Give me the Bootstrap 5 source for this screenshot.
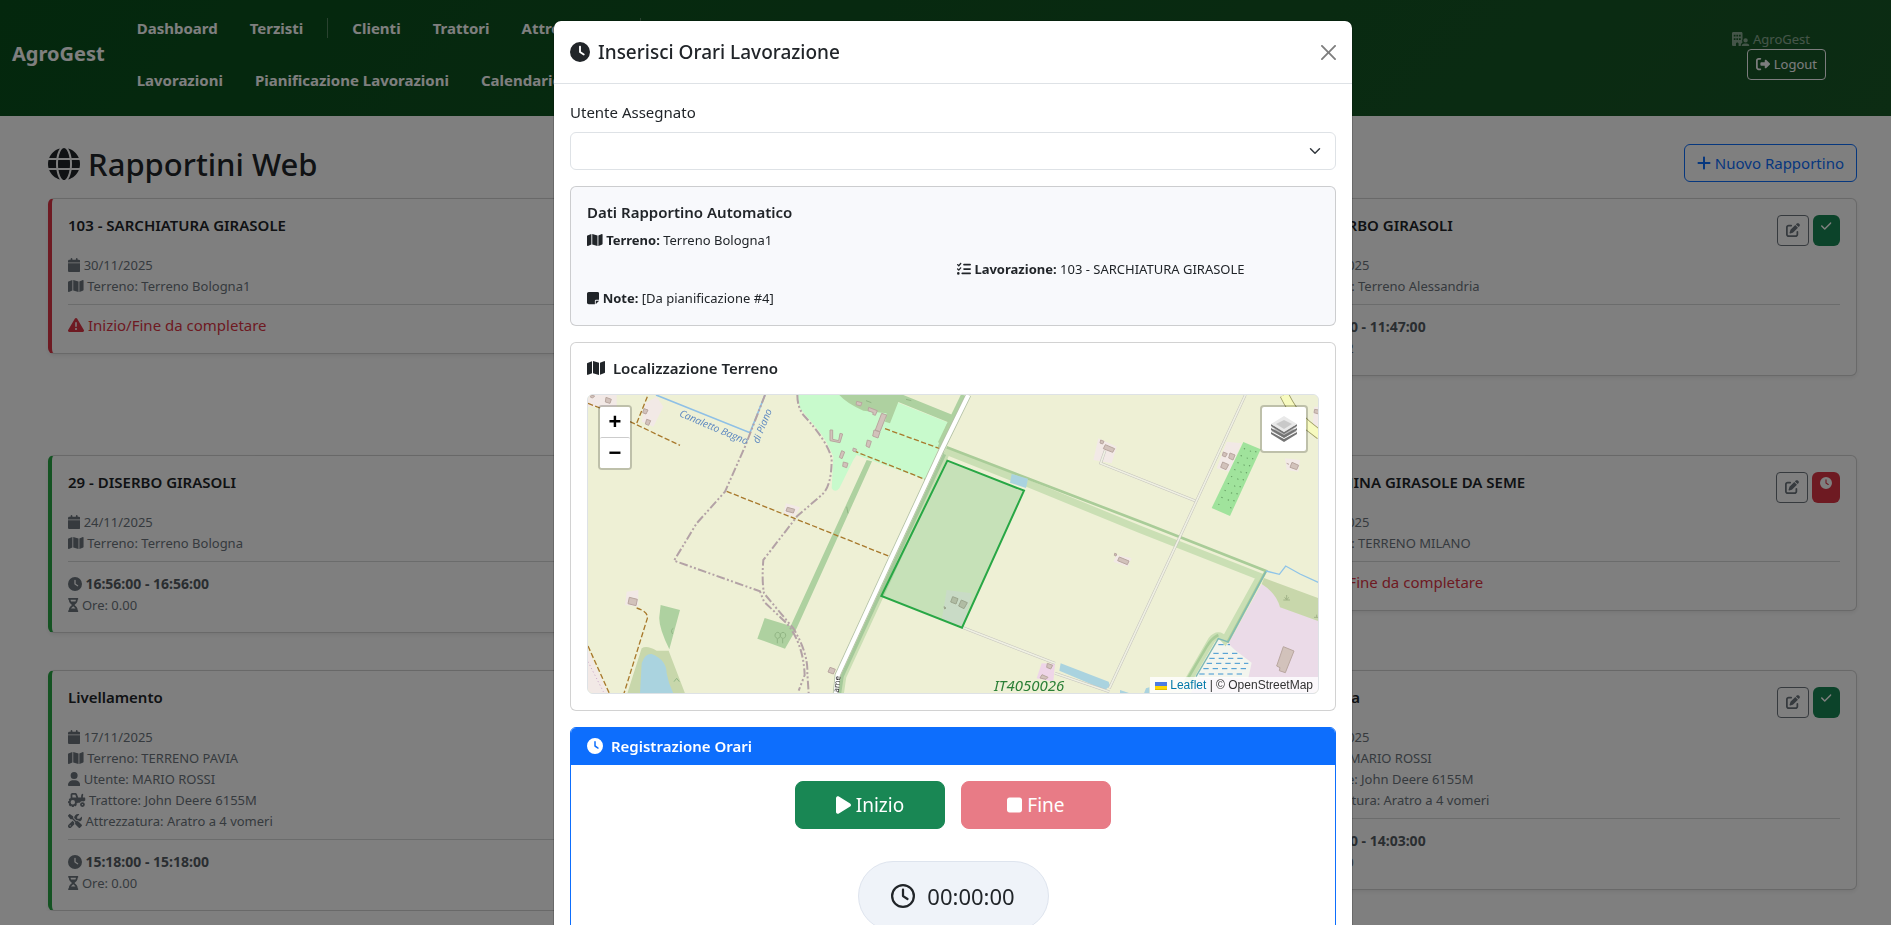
<!DOCTYPE html>
<html lang="it">
<head>
<meta charset="utf-8">
<meta name="viewport" content="width=device-width, initial-scale=1">
<title>AgroGest - Rapportini Web</title>
<link href="https://cdn.jsdelivr.net/npm/bootstrap@5.3.0/dist/css/bootstrap.min.css" rel="stylesheet">
<style>
  :root { --scrollbar: 15px; }
  body { font-family: "Noto Sans", "Open Sans", sans-serif; font-size: 15px; line-height: 24px; overflow: hidden; }
  h6, .h6 { font-size: 15px; line-height: 19px; }
  .btn, .form-select, .form-label { font-size: 15px; line-height: 24px; }
  .btn-sm { font-size: 13px; line-height: 21px; }
  .ic { height: 16px; fill: currentColor; vertical-align: -2px; }
  .ic-14 { height: 14px; }
  .ic-12 { height: 12px; vertical-align: 0; }
  .ic-20 { height: 20px; vertical-align: -3px; }
  .ic-24 { height: 24px; }
  .ic-32 { height: 32px; vertical-align: -4px; }

  .topbar { background: linear-gradient(135deg, #084f1b 0%, #185827 100%); min-height: 116px; padding-right: 65px; }
  .topbar .navbar-brand { font-size: 20px; font-weight: 700; }
  .main-links { width: 620px; row-gap: 12px; }
  .main-links .nav-link { font-weight: 700; color: #fff; padding: 8px 16px; line-height: 24px; }
  .nav-sep { width: 1px; height: 20px; background: rgba(255, 255, 255, .3); margin: 0 8px; }
  .company { font-size: 13px; line-height: 20px; opacity: .5; padding-right: 16px; }

  .page { padding: 28px 34px 0 48px; }
  .page-head { margin-bottom: 12px; }
  .page h1 { font-size: 31px; line-height: 40px; font-weight: 500; padding-bottom: 2px; }
  .report-grid { display: grid; grid-template-columns: repeat(3, 1fr); gap: 16px; align-items: start; }
  .report { border-left: 4px solid #28a745; box-shadow: 0 2px 4px rgba(0, 0, 0, .075); }
  .report.todo { border-left-color: #dc3545; }
  .report .card-head { height: 31px; margin-bottom: 9px; }
  .report h2 { font-size: 15px; line-height: 20px; font-weight: 600; margin: 0; }
  .report .details { font-size: 13px; line-height: 21px; color: #6c757d; }
  .report .details b { font-size: 14px; color: #555c63; }
  .report hr { margin: 7px 0 8px; opacity: .18; }
  .report .hours { padding-top: 3px; }
  .report .badge { padding: 5px 8px; }
  .report .btn-sm { padding: 4px 8px; }

  .modal { padding-left: var(--scrollbar); }
  .modal-dialog { margin-top: 20px; }
  .modal-title { font-size: 19px; line-height: 30px; font-weight: 500; }
  .auto-data { background: #f8f9fc; font-size: 13px; line-height: 21px; }
  .modal h3 { font-size: 15px; line-height: 19px; font-weight: 600; }
  .time-btn { width: 150px; height: 48px; font-size: 19px; border-radius: 8px; }
  .timer { width: 191px; height: 70px; margin-top: 32px; border-radius: 50px; background: #eff3f9; border: 1px solid #dee4ee; font-size: 22px; }
  .hours-head { padding: 9px 16px 8px; }

  .field-map { position: relative; height: 300px; border: 1px solid #dee2e6; border-radius: 6px; overflow: hidden; background: #eef0d5; }
  .field-map > svg { width: 100%; height: 100%; display: block; }
  .map-ctl { position: absolute; top: 10px; border: 2px solid rgba(0, 0, 0, .2); border-radius: 4px; background-clip: padding-box; background-color: #fff; }
  .map-zoom { left: 10px; }
  .map-zoom button { display: block; width: 30px; height: 30px; padding: 0; border: 0; background: #fff; border-radius: 2px; font: bold 22px/30px "Liberation Sans", sans-serif; color: #000; }
  .map-zoom button + button { border-top: 1px solid #ccc; height: 31px; }
  .map-layers { right: 10px; width: 48px; height: 48px; padding: 9px; }
  .map-layers svg { width: 26px; height: 26px; display: block; }
  .map-credit { position: absolute; right: 0; bottom: 0; padding: 0 5px; background: rgba(255, 255, 255, .8); font: 12px/16px "Liberation Sans", Arial, sans-serif; color: #333; }
  .map-credit a { color: #0078a8; text-decoration: none; }
  .map-credit a.plain { color: #333; }
</style>
</head>
<body>

<svg width="0" height="0" class="d-none" aria-hidden="true">
  <symbol id="clock" viewBox="0 0 512 512"><path d="M256 0a256 256 0 1 1 0 512A256 256 0 1 1 256 0zM232 120V256c0 8 4 15.500 10.700 20l96 64c11 7.400 25.900 4.400 33.300-6.700s4.400-25.900-6.700-33.300L280 243.200V120c0-13.300-10.700-24-24-24s-24 10.700-24 24z"/></symbol>
  <symbol id="clock-o" viewBox="0 0 512 512"><path d="M464 256A208 208 0 1 1 48 256a208 208 0 1 1 416 0zM0 256a256 256 0 1 0 512 0A256 256 0 1 0 0 256zM232 120V256c0 8 4 15.500 10.700 20l96 64c11 7.400 25.900 4.400 33.300-6.700s4.400-25.900-6.700-33.300L280 243.200V120c0-13.300-10.700-24-24-24s-24 10.700-24 24z"/></symbol>
  <symbol id="cal" viewBox="0 0 448 512"><path d="M96 32V64H48C21.500 64 0 85.500 0 112v48H448V112c0-26.500-21.500-48-48-48H352V32c0-17.700-14.300-32-32-32s-32 14.300-32 32V64H160V32c0-17.700-14.300-32-32-32S96 14.300 96 32zM448 192H0V464c0 26.500 21.500 48 48 48H400c26.500 0 48-21.500 48-48V192z"/></symbol>
  <symbol id="map" viewBox="0 0 576 512"><path d="M384 476.100L192 421.200V35.900L384 90.800V476.100zm32-1.200V88.400L543.100 37.500c15.800-6.300 32.900 5.300 32.900 22.300V394.600c0 9.800-6 18.600-15.100 22.300L416 474.800zM15.100 95.100L160 37.200V423.600L32.900 474.500C17.100 480.800 0 469.200 0 452.200V117.400c0-9.800 6-18.600 15.100-22.300z"/></symbol>
  <symbol id="warn" viewBox="0 0 512 512"><path d="M256 32c14.200 0 27.300 7.500 34.500 19.800l216 368c7.300 12.400 7.300 27.700 .2 40.100S486.300 480 472 480H40c-14.300 0-27.600-7.700-34.700-20.100s-7-27.800 .2-40.100l216-368C228.700 39.500 241.800 32 256 32zm0 128c-13.300 0-24 10.700-24 24V296c0 13.300 10.700 24 24 24s24-10.700 24-24V184c0-13.300-10.700-24-24-24zm32 224a32 32 0 1 0 -64 0 32 32 0 1 0 64 0z"/></symbol>
  <symbol id="user" viewBox="0 0 448 512"><path d="M224 256A128 128 0 1 0 224 0a128 128 0 1 0 0 256zm-45.700 48C79.800 304 0 383.800 0 482.300C0 498.700 13.300 512 29.700 512H418.300c16.400 0 29.700-13.300 29.700-29.700C448 383.800 368.200 304 269.700 304H178.300z"/></symbol>
  <symbol id="hour" viewBox="0 0 384 512"><path d="M32 0C14.300 0 0 14.300 0 32S14.300 64 32 64V75c0 42.400 16.900 83.100 46.900 113.100L146.700 256 78.900 323.900C48.900 353.900 32 394.600 32 437v11c-17.700 0-32 14.300-32 32s14.300 32 32 32H64 320h32c17.700 0 32-14.300 32-32s-14.300-32-32-32V437c0-42.400-16.900-83.100-46.900-113.100L237.300 256l67.900-67.900c30-30 46.900-70.700 46.900-113.100V64c17.700 0 32-14.300 32-32s-14.300-32-32-32H320 64 32zM96 75V64H288V75c0 19-5.600 37.400-16 53H112c-10.300-15.600-16-34-16-53zm16 309c3.500-5.300 7.600-10.300 12.100-14.900L192 301.300l67.900 67.900c4.600 4.600 8.600 9.600 12.100 14.900H112z"/></symbol>
  <symbol id="tractor" viewBox="0 0 640 512"><path fill-rule="evenodd" d="M96 64c0-35.300 28.700-64 64-64H266.300c26.200 0 49.700 15.900 59.400 40.200L373.700 160H480V126.200c0-24.800 5.800-49.300 16.900-71.600l2.500-5c7.900-15.800 27.100-22.200 42.900-14.300s22.200 27.100 14.300 42.900l-2.500 5c-6.700 13.300-10.100 28-10.100 42.900V160h56c22.100 0 40 17.900 40 40v45.400c0 16.500-8.500 31.900-22.600 40.700l-43.300 27.100c-14.200-5.900-29.800-9.200-46.100-9.200c-39.300 0-74.100 18.900-96 48H352c0 17.700-14.300 32-32 32h-8.200c-1.700 4.800-3.700 9.500-5.800 14.100l5.800 5.800c12.500 12.500 12.500 32.800 0 45.300l-22.600 22.600c-12.500 12.500-32.800 12.500-45.300 0l-5.800-5.800c-4.600 2.200-9.300 4.100-14.100 5.800V480c0 17.700-14.300 32-32 32H160c-17.700 0-32-14.300-32-32v-8.200c-4.800-1.700-9.500-3.700-14.100-5.800l-5.800 5.800c-12.500 12.500-32.800 12.500-45.300 0L40.200 449.100c-12.500-12.500-12.500-32.800 0-45.300l5.800-5.800c-2.200-4.600-4.100-9.300-5.800-14.100H32c-17.700 0-32-14.300-32-32V320c0-17.700 14.300-32 32-32h8.200c1.700-4.800 3.700-9.500 5.800-14.100l-5.800-5.800c-12.500-12.500-12.500-32.800 0-45.300l22.600-22.600c9-9 21.900-11.500 33.100-7.600V64zm170.300 0H160v96h144.700L266.300 64zM176 256a80 80 0 1 0 0 160 80 80 0 1 0 0-160zM528 336a88 88 0 1 0 0 176 88 88 0 1 0 0-176zm0 64a24 24 0 1 1 0 48 24 24 0 1 1 0-48z"/></symbol>
  <symbol id="tools" viewBox="0 0 512 512"><path d="M78.600 5C69.100-2.400 55.600-1.500 47 7L7 47c-8.500 8.500-9.400 22-2.100 31.600l80 104c4.500 5.900 11.600 9.400 19 9.400h54.100l109 109c-14.700 29-10 65.400 14.300 89.600l112 112c12.500 12.500 32.800 12.500 45.300 0l64-64c12.500-12.500 12.500-32.800 0-45.300l-112-112c-24.200-24.200-60.600-29-89.600-14.300l-109-109V104c0-7.500-3.500-14.500-9.400-19L78.600 5zM19.900 396.100C7.200 408.800 0 426.100 0 444.100C0 481.600 30.400 512 67.900 512c18 0 35.300-7.200 48-19.900L233.700 374.300c-7.800-20.900-9-43.600-3.600-65.100l-61.700-61.700L19.900 396.100zM512 144c0-10.500-1.100-20.700-3.200-30.500c-2.400-11.200-16.100-14.100-24.200-6l-63.900 63.900c-3 3-7.100 4.700-11.300 4.700H352c-8.800 0-16-7.200-16-16V102.600c0-4.200 1.700-8.300 4.700-11.300l63.900-63.900c8.100-8.100 5.200-21.800-6-24.200C388.700 1.100 378.500 0 368 0C288.500 0 224 64.500 224 144l0 .8 85.300 85.300c36-9.100 75.800 .5 104 28.700L429 274.500c49-23 83-72.800 83-130.500zM56 432a24 24 0 1 1 48 0 24 24 0 1 1 -48 0z"/></symbol>
  <symbol id="globe" viewBox="0 0 512 512"><path d="M352 256c0 22.200-1.200 43.600-3.300 64H163.300c-2.200-20.400-3.300-41.800-3.300-64s1.200-43.600 3.300-64H348.700c2.200 20.400 3.300 41.800 3.300 64zm28.800-64H503.900c5.300 20.500 8.100 41.900 8.100 64s-2.800 43.500-8.100 64H380.800c2.100-20.600 3.200-42 3.200-64s-1.100-43.400-3.200-64zm112.600-32H376.700c-10-63.900-29.800-117.400-55.300-151.600c78.300 20.700 142 77.500 171.900 151.600zm-149.100 0H167.700c6.100-36.400 15.500-68.600 27-94.700c10.500-23.600 22.200-40.700 33.500-51.500C239.400 3.200 248.700 0 256 0s16.600 3.200 27.800 13.800c11.300 10.800 23 27.900 33.500 51.500c11.600 26 20.900 58.200 27 94.700zm-209 0H18.600C48.600 85.900 112.200 29.100 190.600 8.400C165.100 42.600 145.300 96.100 135.300 160zM8.100 192H131.200c-2.100 20.600-3.200 42-3.200 64s1.100 43.400 3.200 64H8.100C2.800 299.500 0 278.100 0 256s2.800-43.500 8.100-64zM194.700 446.600c-11.600-26-20.900-58.200-27-94.600H344.300c-6.100 36.400-15.500 68.600-27 94.600c-10.500 23.600-22.200 40.700-33.500 51.500C272.600 508.800 263.300 512 256 512s-16.600-3.200-27.800-13.800c-11.300-10.800-23-27.900-33.500-51.500zM135.300 352c10 63.900 29.800 117.400 55.300 151.600C112.200 482.900 48.600 426.100 18.600 352H135.300zm358.100 0c-30 74.100-93.600 130.900-171.900 151.600c25.500-34.200 45.200-87.700 55.300-151.600H493.400z"/></symbol>
  <symbol id="list" viewBox="0 0 512 512"><path d="M152.100 38.200c9.900 8.900 10.700 24 1.800 33.900l-72 80c-4.400 4.900-10.600 7.800-17.200 7.900s-12.900-2.400-17.600-7L7 113C-2.300 103.600-2.300 88.400 7 79s24.600-9.400 33.900 0l22.100 22.100 55.100-61.200c8.900-9.900 24-10.700 33.900-1.800zm0 160c9.900 8.900 10.700 24 1.800 33.900l-72 80c-4.400 4.900-10.600 7.800-17.200 7.900s-12.900-2.400-17.600-7L7 273c-9.400-9.400-9.400-24.600 0-33.900s24.600-9.400 33.900 0l22.100 22.100 55.100-61.200c8.900-9.900 24-10.700 33.900-1.800zM224 96c0-17.700 14.300-32 32-32H480c17.700 0 32 14.300 32 32s-14.300 32-32 32H256c-17.700 0-32-14.300-32-32zm0 160c0-17.700 14.300-32 32-32H480c17.700 0 32 14.300 32 32s-14.300 32-32 32H256c-17.700 0-32-14.300-32-32zM160 416c0-17.700 14.300-32 32-32H480c17.700 0 32 14.300 32 32s-14.300 32-32 32H192c-17.700 0-32-14.300-32-32zM48 368a48 48 0 1 1 0 96 48 48 0 1 1 0-96z"/></symbol>
  <symbol id="note" viewBox="0 0 448 512"><path d="M64 32C28.700 32 0 60.700 0 96V416c0 35.300 28.700 64 64 64H288V368c0-26.500 21.500-48 48-48H448V96c0-35.300-28.700-64-64-64H64zM448 352H336c-8.800 0-16 7.200-16 16V480l32-32 64-64 32-32z"/></symbol>
  <symbol id="play" viewBox="0 0 384 512"><path d="M73 39c-14.800-9.100-33.400-9.400-48.500-.9S0 62.600 0 80V432c0 17.400 9.400 33.400 24.500 41.900s33.700 8.100 48.500-.9L361 297c14.300-8.700 23-24.200 23-41s-8.700-32.200-23-41L73 39z"/></symbol>
  <symbol id="stop" viewBox="0 0 384 512"><path d="M0 128C0 92.700 28.700 64 64 64H320c35.300 0 64 28.700 64 64V384c0 35.300-28.700 64-64 64H64c-35.300 0-64-28.700-64-64V128z"/></symbol>
  <symbol id="plus" viewBox="0 0 448 512"><path d="M256 80c0-17.700-14.300-32-32-32s-32 14.300-32 32V224H48c-17.700 0-32 14.300-32 32s14.300 32 32 32H192V432c0 17.700 14.300 32 32 32s32-14.300 32-32V288H400c17.700 0 32-14.300 32-32s-14.300-32-32-32H256V80z"/></symbol>
  <symbol id="check" viewBox="0 0 448 512"><path d="M438.600 105.400c12.500 12.500 12.500 32.800 0 45.300l-256 256c-12.500 12.500-32.800 12.500-45.300 0l-128-128c-12.500-12.500-12.500-32.800 0-45.300s32.800-12.500 45.300 0L160 338.700 393.400 105.400c12.500-12.500 32.800-12.500 45.300 0z"/></symbol>
  <symbol id="edit" viewBox="0 0 512 512"><path d="M471.600 21.700c-21.900-21.900-57.300-21.900-79.200 0L362.300 51.700l97.900 97.900 30.100-30.100c21.900-21.900 21.900-57.300 0-79.200L471.600 21.700zm-299.200 220c-6.100 6.100-10.800 13.600-13.500 21.900l-29.600 88.800c-2.900 8.600-.6 18.100 5.800 24.600s15.900 8.700 24.600 5.800l88.800-29.600c8.200-2.700 15.700-7.400 21.900-13.500L437.700 172.300 339.700 74.300 172.400 241.700zM96 64C43 64 0 107 0 160V416c0 53 43 96 96 96H352c53 0 96-43 96-96V320c0-17.700-14.300-32-32-32s-32 14.300-32 32v96c0 17.700-14.300 32-32 32H96c-17.700 0-32-14.300-32-32V160c0-17.700 14.300-32 32-32h96c17.700 0 32-14.300 32-32s-14.300-32-32-32H96z"/></symbol>
  <symbol id="exit" viewBox="0 0 512 512"><path d="M377.900 105.900L500.700 228.700c7.200 7.200 11.300 17.100 11.300 27.300s-4.100 20.100-11.300 27.300L377.900 406.100c-6.400 6.400-15 9.900-24 9.900c-18.700 0-33.900-15.200-33.900-33.900l0-62.100-128 0c-17.700 0-32-14.300-32-32l0-64c0-17.700 14.300-32 32-32l128 0 0-62.100c0-18.700 15.200-33.900 33.900-33.900c9 0 17.600 3.600 24 9.900zM160 96L96 96c-17.700 0-32 14.300-32 32l0 256c0 17.700 14.300 32 32 32l64 0c17.700 0 32 14.300 32 32s-14.300 32-32 32l-64 0c-53 0-96-43-96-96L0 128C0 75 43 32 96 32l64 0c17.700 0 32 14.300 32 32s-14.300 32-32 32z"/></symbol>
  <symbol id="company" viewBox="0 0 640 512"><path fill-rule="evenodd" d="M48 0C22 0 0 22 0 48V464c0 26 22 48 48 48h96V432c0-26 22-48 48-48s48 22 48 48v80h84c-6-12-6-30-2-44c10-42 34-76 66-96c-22-30-28-70-4-110V48c0-26-22-48-48-48H48zM64 96h64v64H64zM160 96h64v64h-64zM256 96h64v64h-64zM64 224h64v64H64zM160 224h64v64h-64zM256 224h64v64h-64zM496 224a80 80 0 1 1 0 160 80 80 0 1 1 0-160zM458 416h76c58 0 106 40 106 82c0 8-6 14-14 14H366c-8 0-14-6-14-14c0-42 48-82 106-82z"/></symbol>
</svg>

<nav class="navbar topbar navbar-dark pt-0 pb-2 d-flex flex-nowrap justify-content-between">
  <div class="d-flex align-items-center ps-2 ms-1">
    <a class="navbar-brand m-0 me-3" href="#">AgroGest</a>
    <div class="main-links d-flex flex-wrap align-items-center">
      <a class="nav-link" href="#">Dashboard</a>
      <a class="nav-link" href="#">Terzisti</a>
      <span class="nav-sep"></span>
      <a class="nav-link" href="#">Clienti</a>
      <a class="nav-link" href="#">Trattori</a>
      <a class="nav-link" href="#">Attrezzature</a>
      <span class="nav-sep"></span>
      <a class="nav-link" href="#">Lavorazioni</a>
      <a class="nav-link" href="#">Pianificazione Lavorazioni</a>
      <a class="nav-link" href="#">Calendario</a>
    </div>
  </div>
  <div class="d-flex flex-column align-items-end text-white">
    <span class="company"><svg class="ic ic-14" viewBox="0 0 640 512"><use href="#company"/></svg> AgroGest</span>
    <button type="button" class="btn btn-sm btn-outline-light"><svg class="ic ic-14" viewBox="0 0 512 512"><use href="#exit"/></svg> Logout</button>
  </div>
</nav>

<main class="page">
  <div class="page-head d-flex justify-content-between align-items-start">
    <h1 class="m-0"><svg class="ic ic-32" viewBox="0 0 512 512"><use href="#globe"/></svg> Rapportini Web</h1>
    <button type="button" class="btn btn-outline-primary"><svg class="ic" viewBox="0 0 448 512"><use href="#plus"/></svg> Nuovo Rapportino</button>
  </div>

  <div class="report-grid">
    <article class="card report todo"><div class="card-body">
      <div class="card-head d-flex justify-content-between"><h2>103 - SARCHIATURA GIRASOLE</h2></div>
      <div class="details">
        <div><svg class="ic ic-14" viewBox="0 0 448 512"><use href="#cal"/></svg> 30/11/2025</div>
        <div><svg class="ic ic-14" viewBox="0 0 576 512"><use href="#map"/></svg> Terreno: Terreno Bologna1</div>
      </div>
      <hr>
      <div class="text-danger"><svg class="ic" viewBox="0 0 512 512"><use href="#warn"/></svg> Inizio/Fine da completare</div>
    </div></article>

    <article class="card report"><div class="card-body">
      <div class="card-head d-flex justify-content-between"><h2>Aratura</h2></div>
      <div class="details">
        <div><svg class="ic ic-14" viewBox="0 0 448 512"><use href="#cal"/></svg> 28/11/2025</div>
        <div><svg class="ic ic-14" viewBox="0 0 576 512"><use href="#map"/></svg> Terreno: TERRENO PAVIA</div>
        <div><svg class="ic ic-14" viewBox="0 0 448 512"><use href="#user"/></svg> Utente: MARIO ROSSI</div>
        <div><svg class="ic ic-14" viewBox="0 0 640 512"><use href="#tractor"/></svg> Trattore: John Deere 6155M</div>
        <div><svg class="ic ic-14" viewBox="0 0 512 512"><use href="#tools"/></svg> Attrezzatura: Aratro a 4 vomeri</div>
      </div>
      <hr>
      <div class="details hours">
        <div><svg class="ic ic-14" viewBox="0 0 512 512"><use href="#clock"/></svg> <b>10:20:00 - 11:20:00</b></div>
        <div><svg class="ic ic-14" viewBox="0 0 384 512"><use href="#hour"/></svg> Ore: 1.00</div>
      </div>
    </div></article>

    <article class="card report"><div class="card-body">
      <div class="card-head d-flex justify-content-between"><h2>29 - DISERBO GIRASOLI</h2>
        <div class="d-flex gap-1">
          <button type="button" class="btn btn-sm btn-outline-secondary" aria-label="Modifica"><svg class="ic ic-14" viewBox="0 0 512 512"><use href="#edit"/></svg></button>
          <span class="badge text-bg-success"><svg class="ic ic-12" viewBox="0 0 448 512"><use href="#check"/></svg></span>
        </div></div>
      <div class="details">
        <div><svg class="ic ic-14" viewBox="0 0 448 512"><use href="#cal"/></svg> 25/11/2025</div>
        <div><svg class="ic ic-14" viewBox="0 0 576 512"><use href="#map"/></svg> Terreno: Terreno Alessandria</div>
      </div>
      <hr>
      <div class="details hours">
        <div><svg class="ic ic-14" viewBox="0 0 512 512"><use href="#clock"/></svg> <b>11:46:00 - 11:47:00</b></div>
        <div><svg class="ic ic-14" viewBox="0 0 384 512"><use href="#hour"/></svg> Ore: 0.02</div>
      </div>
    </div></article>

    <article class="card report"><div class="card-body">
      <div class="card-head d-flex justify-content-between"><h2>29 - DISERBO GIRASOLI</h2></div>
      <div class="details">
        <div><svg class="ic ic-14" viewBox="0 0 448 512"><use href="#cal"/></svg> 24/11/2025</div>
        <div><svg class="ic ic-14" viewBox="0 0 576 512"><use href="#map"/></svg> Terreno: Terreno Bologna</div>
      </div>
      <hr>
      <div class="details hours">
        <div><svg class="ic ic-14" viewBox="0 0 512 512"><use href="#clock"/></svg> <b>16:56:00 - 16:56:00</b></div>
        <div><svg class="ic ic-14" viewBox="0 0 384 512"><use href="#hour"/></svg> Ore: 0.00</div>
      </div>
    </div></article>

    <article class="card report"><div class="card-body">
      <div class="card-head d-flex justify-content-between"><h2>Concimazione</h2></div>
      <div class="details">
        <div><svg class="ic ic-14" viewBox="0 0 448 512"><use href="#cal"/></svg> 22/11/2025</div>
        <div><svg class="ic ic-14" viewBox="0 0 576 512"><use href="#map"/></svg> Terreno: TERRENO PAVIA</div>
        <div><svg class="ic ic-14" viewBox="0 0 448 512"><use href="#user"/></svg> Utente: MARIO ROSSI</div>
      </div>
      <hr>
      <div class="details hours">
        <div><svg class="ic ic-14" viewBox="0 0 512 512"><use href="#clock"/></svg> <b>09:00:00 - 10:00:00</b></div>
        <div><svg class="ic ic-14" viewBox="0 0 384 512"><use href="#hour"/></svg> Ore: 1.00</div>
      </div>
    </div></article>

    <article class="card report todo"><div class="card-body">
      <div class="card-head d-flex justify-content-between"><h2>102 - SEMINA GIRASOLE DA SEME</h2>
        <div class="d-flex gap-1">
          <button type="button" class="btn btn-sm btn-outline-secondary" aria-label="Modifica"><svg class="ic ic-14" viewBox="0 0 512 512"><use href="#edit"/></svg></button>
          <span class="badge text-bg-danger"><svg class="ic ic-12" viewBox="0 0 512 512"><use href="#clock"/></svg></span>
        </div></div>
      <div class="details">
        <div><svg class="ic ic-14" viewBox="0 0 448 512"><use href="#cal"/></svg> 20/11/2025</div>
        <div><svg class="ic ic-14" viewBox="0 0 576 512"><use href="#map"/></svg> Terreno: TERRENO MILANO</div>
      </div>
      <hr>
      <div class="text-danger"><svg class="ic" viewBox="0 0 512 512"><use href="#warn"/></svg> Inizio/Fine da completare</div>
    </div></article>

    <article class="card report"><div class="card-body">
      <div class="card-head d-flex justify-content-between"><h2>Livellamento</h2></div>
      <div class="details">
        <div><svg class="ic ic-14" viewBox="0 0 448 512"><use href="#cal"/></svg> 17/11/2025</div>
        <div><svg class="ic ic-14" viewBox="0 0 576 512"><use href="#map"/></svg> Terreno: TERRENO PAVIA</div>
        <div><svg class="ic ic-14" viewBox="0 0 448 512"><use href="#user"/></svg> Utente: MARIO ROSSI</div>
        <div><svg class="ic ic-14" viewBox="0 0 640 512"><use href="#tractor"/></svg> Trattore: John Deere 6155M</div>
        <div><svg class="ic ic-14" viewBox="0 0 512 512"><use href="#tools"/></svg> Attrezzatura: Aratro a 4 vomeri</div>
      </div>
      <hr>
      <div class="details hours">
        <div><svg class="ic ic-14" viewBox="0 0 512 512"><use href="#clock"/></svg> <b>15:18:00 - 15:18:00</b></div>
        <div><svg class="ic ic-14" viewBox="0 0 384 512"><use href="#hour"/></svg> Ore: 0.00</div>
      </div>
    </div></article>

    <article class="card report"><div class="card-body">
      <div class="card-head d-flex justify-content-between"><h2>Aratura</h2></div>
      <div class="details">
        <div><svg class="ic ic-14" viewBox="0 0 448 512"><use href="#cal"/></svg> 16/11/2025</div>
        <div><svg class="ic ic-14" viewBox="0 0 448 512"><use href="#user"/></svg> Utente: MARIO ROSSI</div>
      </div>
    </div></article>

    <article class="card report"><div class="card-body">
      <div class="card-head d-flex justify-content-between"><h2>Erpicatura</h2>
        <div class="d-flex gap-1">
          <button type="button" class="btn btn-sm btn-outline-secondary" aria-label="Modifica"><svg class="ic ic-14" viewBox="0 0 512 512"><use href="#edit"/></svg></button>
          <span class="badge text-bg-success"><svg class="ic ic-12" viewBox="0 0 448 512"><use href="#check"/></svg></span>
        </div></div>
      <div class="details">
        <div><svg class="ic ic-14" viewBox="0 0 448 512"><use href="#cal"/></svg> 15/11/2025</div>
        <div><svg class="ic ic-14" viewBox="0 0 448 512"><use href="#user"/></svg> Utente: MARIO ROSSI</div>
        <div><svg class="ic ic-14" viewBox="0 0 640 512"><use href="#tractor"/></svg> Trattore: John Deere 6155M</div>
        <div><svg class="ic ic-14" viewBox="0 0 512 512"><use href="#tools"/></svg> Attrezzatura: Aratro a 4 vomeri</div>
      </div>
      <hr>
      <div class="details hours">
        <div><svg class="ic ic-14" viewBox="0 0 512 512"><use href="#clock"/></svg> <b>14:03:00 - 14:03:00</b></div>
        <div><svg class="ic ic-14" viewBox="0 0 384 512"><use href="#hour"/></svg> Ore: 0.00</div>
      </div>
    </div></article>
  </div>
</main>

<div class="modal-backdrop show"></div>
<div class="modal show d-block overflow-hidden" tabindex="-1" role="dialog" aria-labelledby="hoursTitle">
  <div class="modal-dialog modal-lg">
    <div class="modal-content">
      <div class="modal-header">
        <h2 class="modal-title" id="hoursTitle"><svg class="ic ic-20 me-2" viewBox="0 0 512 512"><use href="#clock"/></svg>Inserisci Orari Lavorazione</h2>
        <button type="button" class="btn-close" aria-label="Chiudi"></button>
      </div>
      <div class="modal-body">
        <div class="mb-3">
          <label class="form-label" for="assigned">Utente Assegnato</label>
          <select class="form-select" id="assigned"><option></option></select>
        </div>

        <section class="card auto-data mb-3"><div class="card-body">
          <h3 class="mb-2">Dati Rapportino Automatico</h3>
          <div class="row gx-2 gy-2">
            <div class="col-12"><svg class="ic ic-14" viewBox="0 0 576 512"><use href="#map"/></svg> <strong>Terreno:</strong> Terreno Bologna1</div>
            <div class="col-6 offset-6"><svg class="ic ic-14" viewBox="0 0 512 512"><use href="#list"/></svg> <strong>Lavorazione:</strong> 103 - SARCHIATURA GIRASOLE</div>
            <div class="col-12"><svg class="ic ic-14" viewBox="0 0 448 512"><use href="#note"/></svg> <strong>Note:</strong> [Da pianificazione #4]</div>
          </div>
        </div></section>

        <section class="card mb-3"><div class="card-body">
          <h3 class="mb-3"><svg class="ic me-1" viewBox="0 0 576 512"><use href="#map"/></svg> Localizzazione Terreno</h3>
          <div class="field-map">
            <svg viewBox="0 0 2190 894" preserveAspectRatio="xMidYMid slice" role="img" aria-label="Mappa del terreno">
              <rect width="2190" height="894" fill="#eef0d5"/>
              <g transform="translate(-54,-45)" fill="none">
                <path fill="#c8facc" d="M682 45H990L985 68L1136 128L1068 300L860 225L850 240L808 325Q795 340 785 325L790 230Q770 180 740 145T690 85Z"/>
                <path fill="#aed1a0" d="M808 45H1000L1165 112L1155 135L985 66L960 130L945 125L950 100L880 92Q830 70 808 45Z"/>
                <path fill="#aed1a0" d="M890 240L906 244L680 745L645 806L562 776L584 714L662 738ZM272 675L330 690L298 808Q265 740 268 710ZM1160 130L1125 208L1103 200L1132 128Z"/>
                <path fill="#f2e9e6" d="M225 70L260 50L280 80L250 140L215 125ZM170 635L205 630L205 680L165 675ZM648 370L690 382L675 410L640 400ZM54 45H140V80H54ZM54 810L115 940H54Z"/>
                <path fill="#c8d7ab" d="M172 940L215 805Q230 795 260 812L296 812L345 940Z"/>
                <path fill="#aad3df" d="M210 940L215 850Q225 820 245 822Q290 840 290 880Q295 910 310 940Z"/>
                <path stroke="#8fc0e6" stroke-width="5" d="M258 45L540 158L585 45"/>
                <g stroke="#b3a2a6" stroke-width="6" stroke-dasharray="26 7 6 7 6 7">
                  <path d="M585 45L525 200L465 335L380 430L312 542L570 634L582 665L650 730Q700 790 704 885L686 932"/>
                  <path d="M682 45Q682 80 700 105Q770 180 785 235Q785 320 755 345L682 408L580 540Q575 600 582 640L670 745Q715 820 712 880L716 940"/>
                </g>
                <g stroke="#a8792c" stroke-width="4" stroke-dasharray="16 7">
                  <path d="M54 70L90 84M180 125L330 196M232 50L200 130M470 334L960 530M850 212L1070 300M945 146L1110 206M200 684Q235 695 232 715L162 940M54 798L118 940"/>
                </g>
                <path stroke="#c6a3c6" stroke-width="3" stroke-dasharray="3 8" d="M54 845L100 935"/>
                <g fill="#d2c2bb" stroke="#b8a69f" stroke-width="3">
                  <path d="M178 652L202 658L198 677L174 671ZM108 52L124 58L120 70L106 66ZM222 86L234 90L228 102L218 98ZM230 118L242 122L236 136L226 132ZM652 382L674 388L670 399L648 393ZM935 100L950 105L930 155L916 150ZM912 150L930 156L924 174L908 168ZM892 180L904 184L898 203L888 198ZM815 212L824 216L816 236L808 232ZM820 246L834 250L830 263L818 259ZM850 204L860 208L856 216L848 212ZM780 150L788 150L788 178L806 182L810 160L818 162L810 188L780 182ZM860 64L876 68L872 78L858 74ZM896 82L922 92L916 106L908 103L910 98L894 92ZM780 862L796 868L790 882L774 876ZM62 45L74 48L68 54L62 52Z"/>
                </g>
                <g stroke="#91b584" stroke-width="3"><path d="M622 790V775A8 9 0 1 1 624 775M638 790V775A8 9 0 1 1 640 775M310 745Q300 750 308 762M312 905L320 895L328 905M830 380L834 400M888 62L904 68M1008 58L1024 62"/></g>
                <path stroke="#cadfb4" stroke-width="18" d="M1136 208L1000 500L820 890L812 945"/>
                <path stroke="#a5c99a" stroke-width="10" d="M1126 218L978 538L816 890L808 945"/>
                <path stroke="#aed1a0" stroke-width="14" d="M1180 45L1110 190"/>
                <path stroke="#b4c2a6" stroke-width="18" d="M1195 45L1112 215L966 530L803 885L797 945"/>
                <path stroke="#fff" stroke-width="13" d="M1195 45L1112 215L966 530L803 885L797 945"/>
                <g font-family="Open Sans, sans-serif" font-style="italic" font-size="30" fill="#5a86c0">
                  <text transform="translate(326,108) rotate(23)">Canaletto Bagno</text>
                  <text transform="translate(566,192) rotate(-68)">di Piano</text>
                </g>
                <text transform="translate(806,938) rotate(-84)" font-family="Noto Sans, sans-serif" font-size="24" fill="#222">ame</text>
              </g>
              <g transform="translate(1056,-45)" fill="none">
                <path fill="#ebdbe8" d="M965 612L1005 635L1020 680L1136 722V945H750L835 775L865 790Z"/>
                <path fill="#c8d7ab" d="M972 594L1136 655V724L1020 682Q1010 640 965 612Z"/>
                <path fill="#f3f5ee" d="M835 778L862 788L885 810L935 848L925 895H765Z"/>
                <path stroke="#3d94d1" stroke-width="3" stroke-dasharray="16 12" d="M835 794H870M820 820H895M808 835H910M800 850H925M790 866H925M778 882H915"/>
                <path stroke="#cadfb4" stroke-width="22" d="M15 212L250 305L600 448L960 590L855 780Q835 755 815 780L740 910"/>
                <path stroke="#a9cc98" stroke-width="8" d="M20 202L260 294L620 432L978 573L862 788M835 765Q815 775 800 800L745 893"/>
                <path stroke="#7fb9b5" stroke-width="4" d="M978 574L864 786L835 776L768 890"/>
                <path stroke="#8fc4e8" stroke-width="4" d="M978 573L1018 583L1037 558L1080 582L1136 608"/>
                <path fill="#aad3df" d="M215 282L264 296L258 324L210 308ZM362 850L506 905L510 918L495 930L358 872ZM540 930L570 940H540ZM618 925L628 922V940H612Z"/>
                <path fill="#f2e9e6" d="M475 175L530 200L515 250L460 240ZM860 185L905 190L868 275L830 265ZM530 525L575 535L562 560L520 545ZM1035 235L1080 240L1075 275L1040 270ZM1122 80H1136V140H1118ZM20 630L95 640L70 740L5 720Z"/>
                <path fill="#eed5e8" d="M305 850L345 852L340 905L290 895Z"/>
                <path fill="#a0e39c" d="M910 186L962 208L870 408L815 384Z"/>
                <path stroke="#639b61" stroke-width="4" stroke-dasharray="3 20" d="M914 205L836 374M932 212L858 376M948 214L866 398"/>
                <g stroke="#c4c2bd" stroke-width="8"><path d="M916 45L720 470L508 925M765 362L482 250L495 212M66 742L345 850M345 880L508 935"/></g>
                <g stroke="#eff0e2" stroke-width="5"><path d="M916 45L720 470L508 925M765 362L482 250L495 212M66 742L345 850M345 880L508 935"/></g>
                <path stroke="#9b9a63" stroke-width="29" d="M1033 45Q1055 90 1080 115T1140 165"/>
                <path stroke="#f7fabf" stroke-width="24" d="M1033 45Q1055 90 1080 115T1140 165"/>
                <g fill="#d2c2bb" stroke="#b8a69f" stroke-width="3">
                  <path d="M496 194L524 206L518 217L490 206ZM482 180L492 184L488 192L480 189ZM538 531L567 543L562 554L533 542ZM524 520L530 522L528 528L523 526ZM850 216L862 221L856 231L847 227ZM870 219L885 225L879 240L866 234ZM848 246L866 254L858 269L842 262ZM1056 247L1076 256L1070 269L1050 262ZM1040 250L1047 253M1124 88L1136 90V102L1122 98ZM1030 800L1062 813L1036 878L1018 872L1020 863L1010 858ZM322 850L338 856L332 867L320 862ZM306 884L324 892L318 898L300 894Z"/>
                  <path d="M38 650L54 656L48 672L32 666ZM64 660L82 668L72 686L56 678ZM12 680L18 684L14 687Z"/>
                </g>
                <path stroke="#a0b388" stroke-width="3" d="M1030 660H1050M1034 652L1040 660L1046 652M1040 645V660M1122 712H1136M1130 704V712"/>
                <path fill="#28a745" fill-opacity=".2" stroke="#28a745" stroke-width="6" d="M22 242L252 332L66 743L-176 648Z"/>
                <text x="162" y="932" font-family="Noto Sans, sans-serif" font-style="italic" font-size="45" fill="#2a7f36">IT4050026</text>
              </g>
            </svg>
            <div class="map-ctl map-zoom">
              <button type="button" aria-label="Zoom in">+</button>
              <button type="button" aria-label="Zoom out">−</button>
            </div>
            <button type="button" class="map-ctl map-layers" aria-label="Livelli">
              <svg viewBox="0 0 26 26"><path fill="#747474" d="M0 16l13 7 13-7v2l-13 8-13-8z"/><path fill="#b9b9b9" d="M0 15l13 7 13-7-13-6z"/><path fill="#747474" d="M0 12l13 7 13-7v2l-13 8-13-8z"/><path fill="#c9c9c9" d="M0 11l13 7 13-7-13-6z"/><path fill="#747474" d="M0 8l13 8 13-8v2l-13 8-13-8z"/><path fill="#e9e9e9" d="M0 8L13 0l13 8-13 8z"/><path fill="#c9c9c9" d="M5 8l8-4 8 4-8 5z"/></svg>
            </button>
            <div class="map-credit"><a href="#"><svg width="12" height="8" viewBox="0 0 12 8"><path fill="#4C7BE1" d="M0 0h12v4H0z"/><path fill="#FFD500" d="M0 4h12v3H0z"/><path fill="#E0BC00" d="M0 7h12v1H0z"/></svg> Leaflet</a> | © <a class="plain" href="#">OpenStreetMap</a></div>
          </div>
        </div></section>

        <section class="card border-primary">
          <div class="card-header hours-head text-bg-primary border-primary"><h3 class="m-0"><svg class="ic me-1" viewBox="0 0 512 512"><use href="#clock"/></svg> Registrazione Orari</h3></div>
          <div class="card-body">
            <div class="d-flex justify-content-center gap-3">
              <button type="button" class="btn btn-success time-btn"><svg class="ic ic-20" viewBox="0 0 384 512"><use href="#play"/></svg> Inizio</button>
              <button type="button" class="btn btn-danger time-btn" disabled><svg class="ic ic-20" viewBox="0 0 384 512"><use href="#stop"/></svg> Fine</button>
            </div>
            <div class="timer d-flex align-items-center justify-content-center gap-2 mx-auto mb-4">
              <svg class="ic ic-24" viewBox="0 0 512 512"><use href="#clock-o"/></svg><span class="ms-1">00:00:00</span>
            </div>
          </div>
        </section>
      </div>
    </div>
  </div>
</div>

<script src="https://cdn.jsdelivr.net/npm/bootstrap@5.3.0/dist/js/bootstrap.bundle.min.js"></script>
</body>
</html>
